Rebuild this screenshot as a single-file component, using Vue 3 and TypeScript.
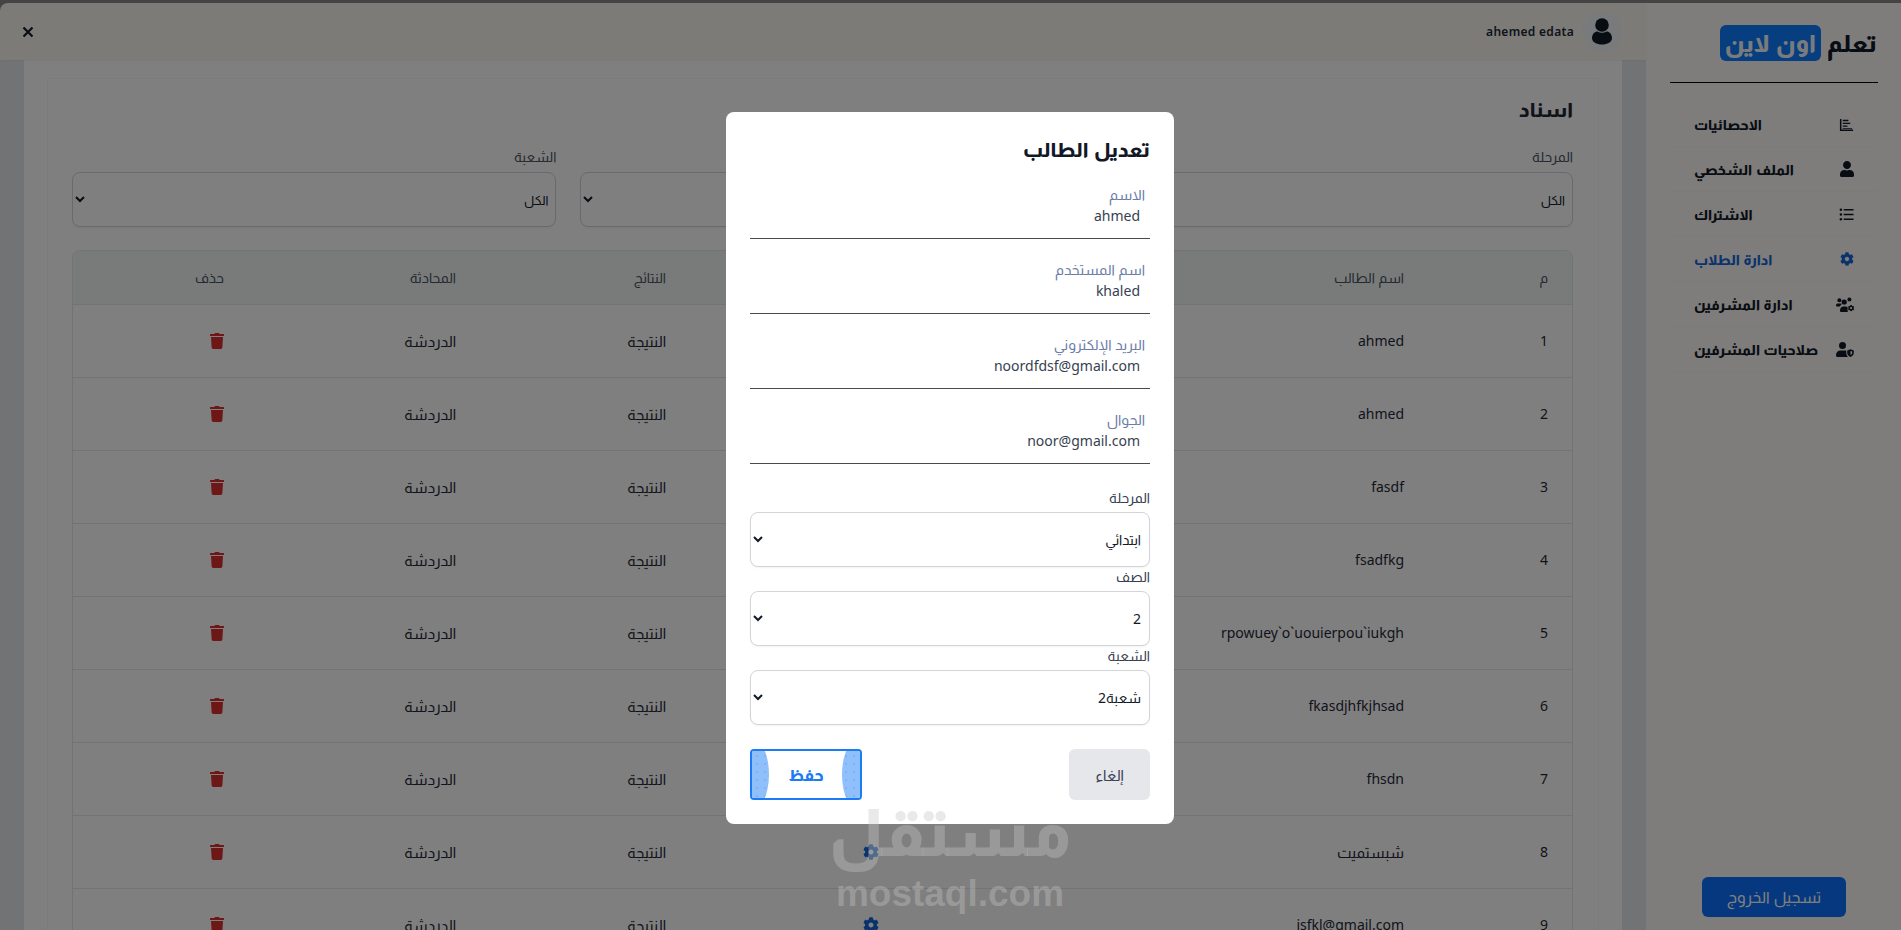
<script setup lang="ts">
import { ref } from 'vue'

interface Student {
  id: number
  name: string
}

interface NavItem {
  label: string
  icon: string
  active?: boolean
}

const navItems: NavItem[] = [
  { label: 'الاحصائيات', icon: 'chart' },
  { label: 'الملف الشخصي', icon: 'user' },
  { label: 'الاشتراك', icon: 'list' },
  { label: 'ادارة الطلاب', icon: 'cog', active: true },
  { label: 'ادارة المشرفين', icon: 'users' },
  { label: 'صلاحيات المشرفين', icon: 'shield' }
]

const students: Student[] = [
  'ahmed',
  'ahmed',
  'fasdf',
  'fsadfkg',
  'rpowuey`o`uouierpou`iukgh',
  'fkasdjhfkjhsad',
  'fhsdn',
  'شبستميت',
  'jsfkl@gmail.com'
].map((name, i) => ({ id: i + 1, name }))

const filters = ['المرحلة', 'الصف', 'الشعبة']

const isArabic = (text: string) => /[\u0600-\u06ff]/.test(text)

const form = ref({
  name: 'ahmed',
  username: 'khaled',
  email: 'noordfdsf@gmail.com',
  phone: 'noor@gmail.com',
  stage: 'ابتدائي',
  grade: '2',
  section: 'شعبة2'
})

const cogPath =
  'M487.4 315.7l-42.6-24.6c4.3-23.2 4.3-47 0-70.2l42.6-24.6c4.9-2.8 7.1-8.6 5.5-14-11.1-35.6-30-67.8-54.7-94.6-3.8-4.1-10-5.1-14.8-2.3L380.8 110c-17.9-15.4-38.5-27.3-60.8-35.1V25.8c0-5.6-3.9-10.5-9.4-11.7-36.7-8.2-74.3-7.8-109.2 0-5.5 1.2-9.4 6.1-9.4 11.7V75c-22.2 7.9-42.8 19.8-60.8 35.1L88.7 85.5c-4.9-2.8-11-1.9-14.8 2.3-24.7 26.7-43.6 58.9-54.7 94.6-1.7 5.4.6 11.2 5.5 14L67.3 221c-4.3 23.2-4.3 47 0 70.2l-42.6 24.6c-4.9 2.8-7.1 8.6-5.5 14 11.1 35.6 30 67.8 54.7 94.6 3.8 4.1 10 5.1 14.8 2.3l42.6-24.6c17.9 15.4 38.5 27.3 60.8 35.1v49.2c0 5.6 3.9 10.5 9.4 11.7 36.7 8.2 74.3 7.8 109.2 0 5.5-1.2 9.4-6.1 9.4-11.7v-49.2c22.2-7.9 42.8-19.8 60.8-35.1l42.6 24.6c4.9 2.8 11 1.9 14.8-2.3 24.7-26.7 43.6-58.9 54.7-94.6 1.5-5.5-.7-11.3-5.6-14.1zM256 336c-44.1 0-80-35.9-80-80s35.9-80 80-80 80 35.9 80 80-35.9 80-80 80z'
const userPath =
  'M224 256c70.7 0 128-57.3 128-128S294.7 0 224 0 96 57.3 96 128s57.3 128 128 128zm89.6 32h-16.7c-22.2 10.2-46.9 16-72.9 16s-50.6-5.8-72.9-16h-16.7C60.2 288 0 348.2 0 422.4V464c0 26.5 21.5 48 48 48h352c26.5 0 48-21.5 48-48v-41.6c0-74.2-60.2-134.4-134.4-134.4z'
const trashPath =
  'M432 32H312l-9.4-18.7A24 24 0 0 0 281.1 0H166.8a23.72 23.72 0 0 0-21.4 13.3L136 32H16A16 16 0 0 0 0 48v32a16 16 0 0 0 16 16h416a16 16 0 0 0 16-16V48a16 16 0 0 0-16-16zM53.2 467a48 48 0 0 0 47.9 45h245.8a48 48 0 0 0 47.9-45L416 128H32z'
</script>

<template>
  <div class="shell" dir="rtl">
    <aside class="sidebar">
      <div class="logo">
        <span class="logo-text">تعلم</span>
        <span class="logo-badge">اون لاين</span>
      </div>
      <nav class="nav">
        <a v-for="item in navItems" :key="item.label" :class="['nav-item', { active: item.active }]">
          <span class="nav-icon">
            <svg v-if="item.icon === 'chart'" viewBox="0 0 16 16" width="15" height="15">
              <path d="M1 2h1.6v11.4H15V15H1z M4 3h6v1.5H4z M4 6h8v1.5H4z M4 9h5v1.5H4z M4 11.6h10v1H4z" fill="currentColor" />
            </svg>
            <svg v-else-if="item.icon === 'user'" viewBox="0 0 448 512" width="14" height="16">
              <path :d="userPath" fill="currentColor" />
            </svg>
            <svg v-else-if="item.icon === 'list'" viewBox="0 0 16 16" width="15" height="15">
              <circle cx="2" cy="3" r="1.3" fill="currentColor" />
              <circle cx="2" cy="8" r="1.3" fill="currentColor" />
              <circle cx="2" cy="13" r="1.3" fill="currentColor" />
              <path d="M5 2.2h10.5v1.6H5z M5 7.2h10.5v1.6H5z M5 12.2h10.5v1.6H5z" fill="currentColor" />
            </svg>
            <svg v-else-if="item.icon === 'cog'" viewBox="0 0 512 512" width="14" height="14">
              <path :d="cogPath" fill="currentColor" />
            </svg>
            <svg v-else-if="item.icon === 'users'" viewBox="0 0 18 15" width="18" height="15">
              <circle cx="3.4" cy="3.2" r="2" fill="currentColor" />
              <circle cx="13.4" cy="2.4" r="2" fill="currentColor" />
              <circle cx="8.2" cy="5" r="2.6" fill="currentColor" />
              <path d="M0 8.4c0-1.4 1-2 2-2h2.600c.5 0 1 .2 1.400.6-1 .7-1.700 1.500-1.900 2.600H1c-.6 0-1-.5-1-1.200z M4 13.400c0-2.400 1.700-4 3.500-4h2.300c.7 0 1.300.2 1.800.5v3.600c0 .5.100 1 .4 1.500H5.300C4.500 15 4 14.300 4 13.400z" fill="currentColor" />
              <svg x="11.800" y="7.800" width="6.600" height="6.600" viewBox="0 0 512 512">
                <path :d="cogPath" fill="currentColor" />
              </svg>
            </svg>
            <svg v-else viewBox="0 0 18 15" width="18" height="15">
              <circle cx="6.500" cy="3.600" r="3.500" fill="currentColor" />
              <path d="M0 13.200c0-2.900 2-4.800 4.400-4.800h4.200c.6 0 1.200.1 1.700.3v2c0 1.600.6 3.200 1.900 4.300H1.400C.6 15 0 14.200 0 13.200z" fill="currentColor" />
              <path d="M14.500 7.200l3.300 1.300v2.300c0 2-1.400 3.500-3.300 4.200-1.900-.7-3.300-2.200-3.300-4.200V8.500zm0 1.700v4.100c1-.5 1.700-1.200 1.700-2.200V9.600z" fill="currentColor" fill-rule="evenodd" />
            </svg>
          </span>
          <span class="nav-label">{{ item.label }}</span>
        </a>
      </nav>
      <button class="logout" type="button">تسجيل الخروج</button>
    </aside>

    <div class="main">
      <header class="topbar">
        <div class="user">
          <span class="avatar">
            <svg viewBox="0 0 22 27" width="22" height="27">
              <circle cx="11" cy="7" r="6.800" fill="currentColor" />
              <path d="M1 20c0-3.800 2.800-6.500 5.500-6.500 2.800 1.600 6.200 1.600 9 0 2.700 0 5.500 2.700 5.500 6.500 0 4.300-4.600 6.500-10 6.500S1 24.300 1 20z" fill="currentColor" />
            </svg>
          </span>
          <span class="user-name" dir="ltr">ahemed edata</span>
        </div>
        <button class="close" type="button" aria-label="close">
          <svg viewBox="0 0 12 12" width="12" height="12">
            <path d="M1.500 1.500l9 9M10.500 1.500l-9 9" stroke="currentColor" stroke-width="2.200" fill="none" />
          </svg>
        </button>
      </header>

      <div class="content">
        <section class="card">
          <div class="inner">
            <h1 class="title">اسناد</h1>
            <div class="filters">
              <label v-for="f in filters" :key="f" class="filter">
                <span class="filter-label">{{ f }}</span>
                <select class="filter-select"><option>الكل</option></select>
              </label>
            </div>
            <div class="table-wrap">
              <table class="table">
                <colgroup>
                  <col class="c-num" />
                  <col class="c-name" />
                  <col class="c-edit" />
                  <col class="c-result" />
                  <col class="c-chat" />
                  <col class="c-del" />
                </colgroup>
                <thead>
                  <tr>
                    <th>م</th>
                    <th>اسم الطالب</th>
                    <th>تعديل</th>
                    <th>النتائج</th>
                    <th>المحادثة</th>
                    <th>حذف</th>
                  </tr>
                </thead>
                <tbody>
                  <tr v-for="s in students" :key="s.id">
                    <td>{{ s.id }}</td>
                    <td :class="{ ar: isArabic(s.name) }">{{ s.name }}</td>
                    <td>
                      <svg class="edit-icon" viewBox="0 0 512 512" width="16" height="16">
                        <path :d="cogPath" fill="currentColor" />
                      </svg>
                    </td>
                    <td class="ar">النتيجة</td>
                    <td class="ar">الدردشة</td>
                    <td>
                      <svg class="trash-icon" viewBox="0 0 448 512" width="14" height="16">
                        <path :d="trashPath" fill="currentColor" />
                      </svg>
                    </td>
                  </tr>
                </tbody>
              </table>
            </div>
          </div>
        </section>
      </div>
    </div>

    <div class="overlay">
      <form class="modal" @submit.prevent>
        <h2 class="modal-title">تعديل الطالب</h2>
        <label class="field">
          <span class="field-label">الاسم</span>
          <input v-model="form.name" class="field-input" type="text" />
        </label>
        <label class="field">
          <span class="field-label">اسم المستخدم</span>
          <input v-model="form.username" class="field-input" type="text" />
        </label>
        <label class="field">
          <span class="field-label">البريد الإلكتروني</span>
          <input v-model="form.email" class="field-input" type="text" />
        </label>
        <label class="field">
          <span class="field-label">الجوال</span>
          <input v-model="form.phone" class="field-input" type="text" />
        </label>

        <div class="selects">
          <label class="pick">
            <span class="pick-label">المرحلة</span>
            <select v-model="form.stage" class="pick-select"><option>ابتدائي</option></select>
          </label>
          <label class="pick">
            <span class="pick-label">الصف</span>
            <select v-model="form.grade" class="pick-select"><option>2</option></select>
          </label>
          <label class="pick">
            <span class="pick-label">الشعبة</span>
            <select v-model="form.section" class="pick-select"><option>شعبة2</option></select>
          </label>
        </div>

        <div class="actions">
          <button class="btn-cancel" type="button">إلغاء</button>
          <button class="btn-save" type="submit"><span>حفظ</span></button>
        </div>
      </form>
    </div>

    <div class="watermark" aria-hidden="true">
      <span class="wm-ar">مستقل</span>
      <span class="wm-en">mostaql.com</span>
    </div>
  </div>
</template>

<style>
html,
body {
  margin: 0;
  height: 100%;
  overflow: hidden;
}
</style>

<style scoped>
* {
  box-sizing: border-box;
}

.shell {
  display: flex;
  height: 930px;
  padding-top: 3px;
  background: #888;
  font-family: "Noto Sans", Almarai, sans-serif;
  font-size: 14px;
  color: #111827;
  overflow: hidden;
  position: relative;
}

.sidebar {
  width: 255px;
  flex-shrink: 0;
  display: flex;
  flex-direction: column;
  align-items: center;
  padding: 0 23px 13px 24px;
  background: #fcfaf6;
}

.logo {
  width: 100%;
  height: 80px;
  display: flex;
  align-items: center;
  gap: 6px;
  border-bottom: 1px solid #000;
  padding-right: 1px;
}

.logo-text {
  font-size: 24px;
  font-weight: 800;
  color: #111827;
}

.logo-badge {
  height: 36px;
  width: 101px;
  display: flex;
  align-items: center;
  justify-content: center;
  border-radius: 6px;
  background: #0c7cff;
  color: #f3f6fb;
  font-size: 24px;
  font-weight: 800;
}

.nav {
  width: 100%;
  margin-top: 19px;
  display: flex;
  flex-direction: column;
}

.nav-item {
  height: 45px;
  padding: 0 24px;
  display: flex;
  align-items: center;
  justify-content: space-between;
  font-size: 14px;
  font-weight: 800;
  color: #111827;
  border-bottom: 1px solid #f8f6f2;
}

.nav-item.active {
  color: #1565d8;
}

.nav-icon {
  display: flex;
  align-items: center;
}

.logout {
  margin-top: auto;
  width: 144px;
  height: 40px;
  border: 0;
  border-radius: 6px;
  background: #0a70ff;
  color: #fff;
  font-family: inherit;
  font-size: 16px;
}

.main {
  flex: 1;
  min-width: 0;
  display: flex;
  flex-direction: column;
}

.topbar {
  height: 57px;
  flex-shrink: 0;
  padding: 0 24px 0 22px;
  display: flex;
  align-items: center;
  justify-content: space-between;
  background: #f9f7f1;
  border-radius: 8px 0 0 0;
  box-shadow: 0 1px 2px rgba(0, 0, 0, 0.05);
  position: relative;
}

.user {
  display: flex;
  align-items: center;
  gap: 8px;
}

.avatar {
  width: 40px;
  height: 40px;
  border-radius: 50%;
  background: #f3f4f6;
  display: flex;
  align-items: center;
  justify-content: center;
}

.user-name {
  font-size: 12px;
  font-weight: 600;
  letter-spacing: 0.3px;
  color: #1f2937;
}

.close {
  padding: 0;
  border: 0;
  background: none;
  display: flex;
  color: #111827;
}

.content {
  flex: 1;
  padding: 0 24px;
  background: #e5e7eb;
  overflow: hidden;
}

.card {
  height: 100%;
  padding: 18px 23px 0;
  background: #fff;
}

.inner {
  height: 100%;
  padding: 17px 25px 0 24px;
  border: solid #f7f7f7;
  border-width: 1px 1px 0;
}

.title {
  margin: 0 0 23px;
  font-size: 20px;
  line-height: 28px;
  font-weight: 800;
  color: #1f2937;
}

.filters {
  display: grid;
  grid-template-columns: repeat(3, 1fr);
  gap: 24px;
}

.filter {
  display: flex;
  flex-direction: column;
  gap: 5px;
}

.filter-label {
  font-size: 14px;
  line-height: 20px;
  color: #4b5563;
}

.filter-select {
  width: 100%;
  height: 55px;
  padding: 0 3px;
  border: 1px solid #d1d5db;
  border-radius: 8px;
  background: #fff;
  box-shadow: 0 1px 2px rgba(0, 0, 0, 0.05);
  font-family: inherit;
  font-size: 13px;
  color: #111827;
}

.table-wrap {
  margin-top: 23px;
  border: 1px solid #e5e7eb;
  border-bottom: 0;
  border-radius: 8px 8px 0 0;
  overflow: hidden;
}

.table {
  width: 100%;
  table-layout: fixed;
  border-collapse: collapse;
}

.c-num { width: 144px; }
.c-name { width: 524px; }
.c-edit { width: 214px; }
.c-result { width: 210px; }
.c-chat { width: 232px; }
.c-del { width: auto; }

.table th {
  height: 53px;
  padding: 0 24px;
  background: #f3f7f6;
  border-bottom: 1px solid #e5e7eb;
  text-align: right;
  font-size: 14px;
  font-weight: 400;
  color: #4b5563;
}

.table td {
  height: 73px;
  padding: 0 24px;
  border-bottom: 1px solid #e5e7eb;
  text-align: right;
  font-size: 14px;
  color: #1f2937;
}

.table td.ar {
  font-size: 15px;
}

.edit-icon {
  display: block;
  margin-right: 1px;
  color: #1565d8;
}

.trash-icon {
  display: block;
  color: #dc2f2f;
}

.overlay {
  position: absolute;
  inset: 0;
  padding-top: 112px;
  padding-right: 1px;
  display: flex;
  justify-content: center;
  align-items: flex-start;
  background: rgba(0, 0, 0, 0.5);
}

.modal {
  width: 448px;
  height: 712px;
  padding: 24px;
  background: #fff;
  border-radius: 8px;
}

.modal-title {
  margin: 0;
  font-size: 20px;
  line-height: 28px;
  font-weight: 800;
  color: #111827;
}

.field {
  display: block;
  height: 75px;
  padding-top: 21px;
  border-bottom: 1px solid #4a4a4a;
}

.field-label {
  display: block;
  padding-right: 5px;
  font-size: 14.500px;
  line-height: 18px;
  color: #6b7ea8;
}

.field-input {
  display: block;
  width: 100%;
  padding: 3px 10px 0;
  border: 0;
  outline: 0;
  background: transparent;
  font-family: inherit;
  font-size: 14px;
  line-height: 20px;
  color: #374151;
}

.selects {
  margin-top: 24px;
  display: flex;
  flex-direction: column;
}

.pick {
  display: block;
}

.pick-label {
  display: block;
  margin-bottom: 4px;
  font-size: 14px;
  line-height: 20px;
  color: #374151;
}

.pick-select {
  display: block;
  width: 100%;
  height: 55px;
  padding: 0 4px;
  border: 1px solid #d1d5db;
  border-radius: 8px;
  background: #fff;
  box-shadow: 0 1px 2px rgba(0, 0, 0, 0.05);
  font-family: inherit;
  font-size: 14px;
  color: #111827;
}

.actions {
  margin-top: 24px;
  display: flex;
  justify-content: space-between;
}

.btn-cancel {
  width: 81px;
  height: 51px;
  border: 0;
  border-radius: 6px;
  background: #e5e7eb;
  font-family: inherit;
  font-size: 15px;
  color: #374151;
}

.btn-save {
  width: 112px;
  height: 51px;
  padding: 0;
  position: relative;
  overflow: hidden;
  border: 2px solid #1d7bf5;
  border-radius: 4px;
  background: #fff;
  font-family: inherit;
  font-size: 16px;
  font-weight: 800;
  color: #1d7bf5;
}

.btn-save::before,
.btn-save::after {
  content: "";
  position: absolute;
  top: -15px;
  bottom: -15px;
  width: 40px;
  border-radius: 50%;
  background: #8fc0fb radial-gradient(#7aaef0 0.6px, transparent 1px) 0 0 / 8px 8px;
}

.btn-save::before {
  right: -22px;
}

.btn-save::after {
  left: -23px;
}

.watermark {
  position: absolute;
  top: 790px;
  left: 830px;
  width: 240px;
  display: flex;
  flex-direction: column;
  align-items: center;
  color: rgba(198, 198, 198, 0.38);
  font-weight: 700;
  pointer-events: none;
}

.wm-ar {
  font-family: Almarai, sans-serif;
  font-weight: 800;
  font-size: 66px;
  line-height: 86px;
}

.wm-en {
  font-family: "Liberation Sans", sans-serif;
  font-size: 37px;
  line-height: 36px;
}
</style>
